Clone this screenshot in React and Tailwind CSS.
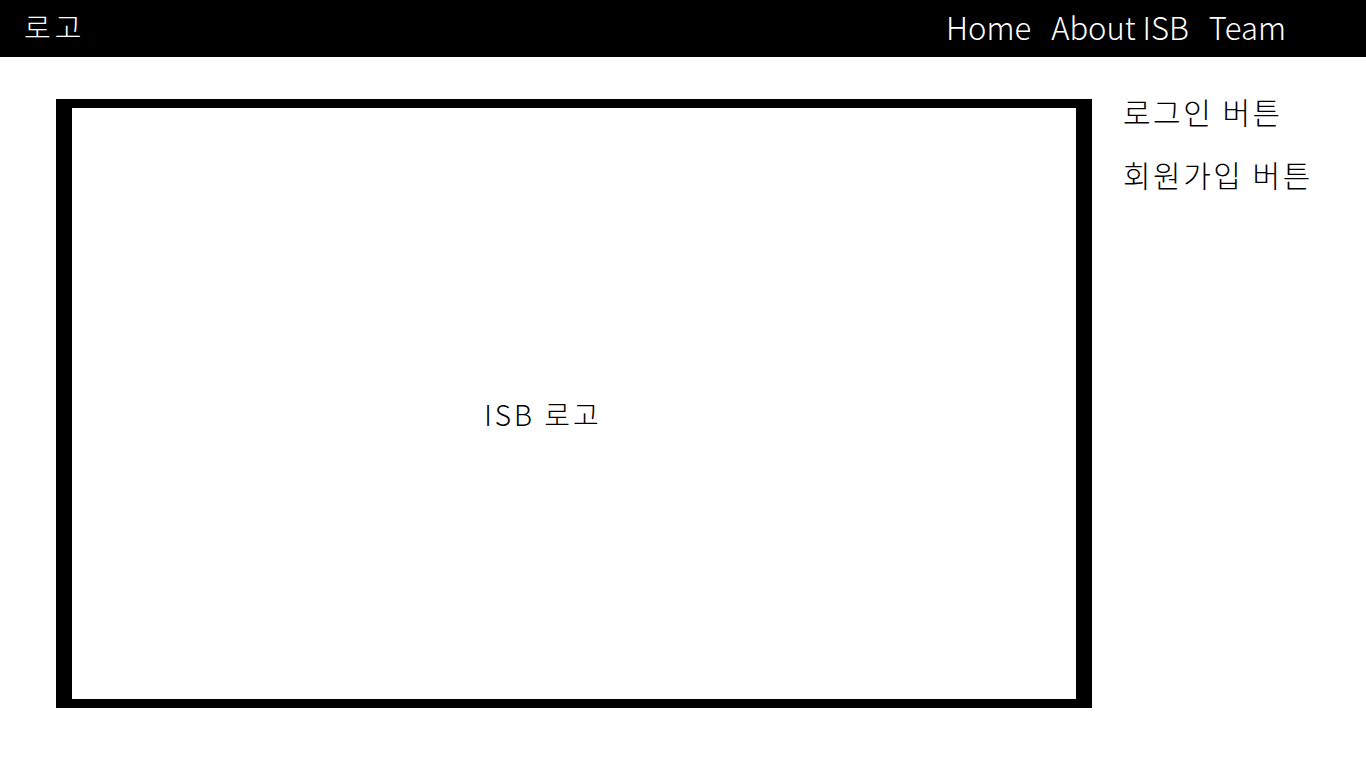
export default function App() {
  return (
    <div className="min-h-screen bg-white text-black font-['Noto_Sans_CJK_KR',sans-serif] font-light">
      {/* Header */}
      <header className="flex h-[57px] items-center justify-between bg-black pb-[5px] pl-6 pr-20 text-white">
        <div className="text-[29px] leading-none tracking-[4px]">로고</div>
        <nav className="flex items-center gap-5 text-[31px] leading-none">
          <a href="#">Home</a>
          <a href="#">About ISB</a>
          <a href="#">Team</a>
        </nav>
      </header>

      {/* Body */}
      <main className="flex pl-14 pt-[42px]">
        <div className="flex h-[609px] w-[1036px] items-center justify-center border-x-[16px] border-y-[9px] border-black pr-[62px] pt-[20px] text-[28px] tracking-[3px]">
          ISB 로고
        </div>
        <div className="-mt-[3px] flex flex-col gap-[33px] pl-[31px] text-[30px] leading-none tracking-[2.5px]">
          <button className="text-left">로그인 버튼</button>
          <button className="text-left">회원가입 버튼</button>
        </div>
      </main>
    </div>
  );
}
